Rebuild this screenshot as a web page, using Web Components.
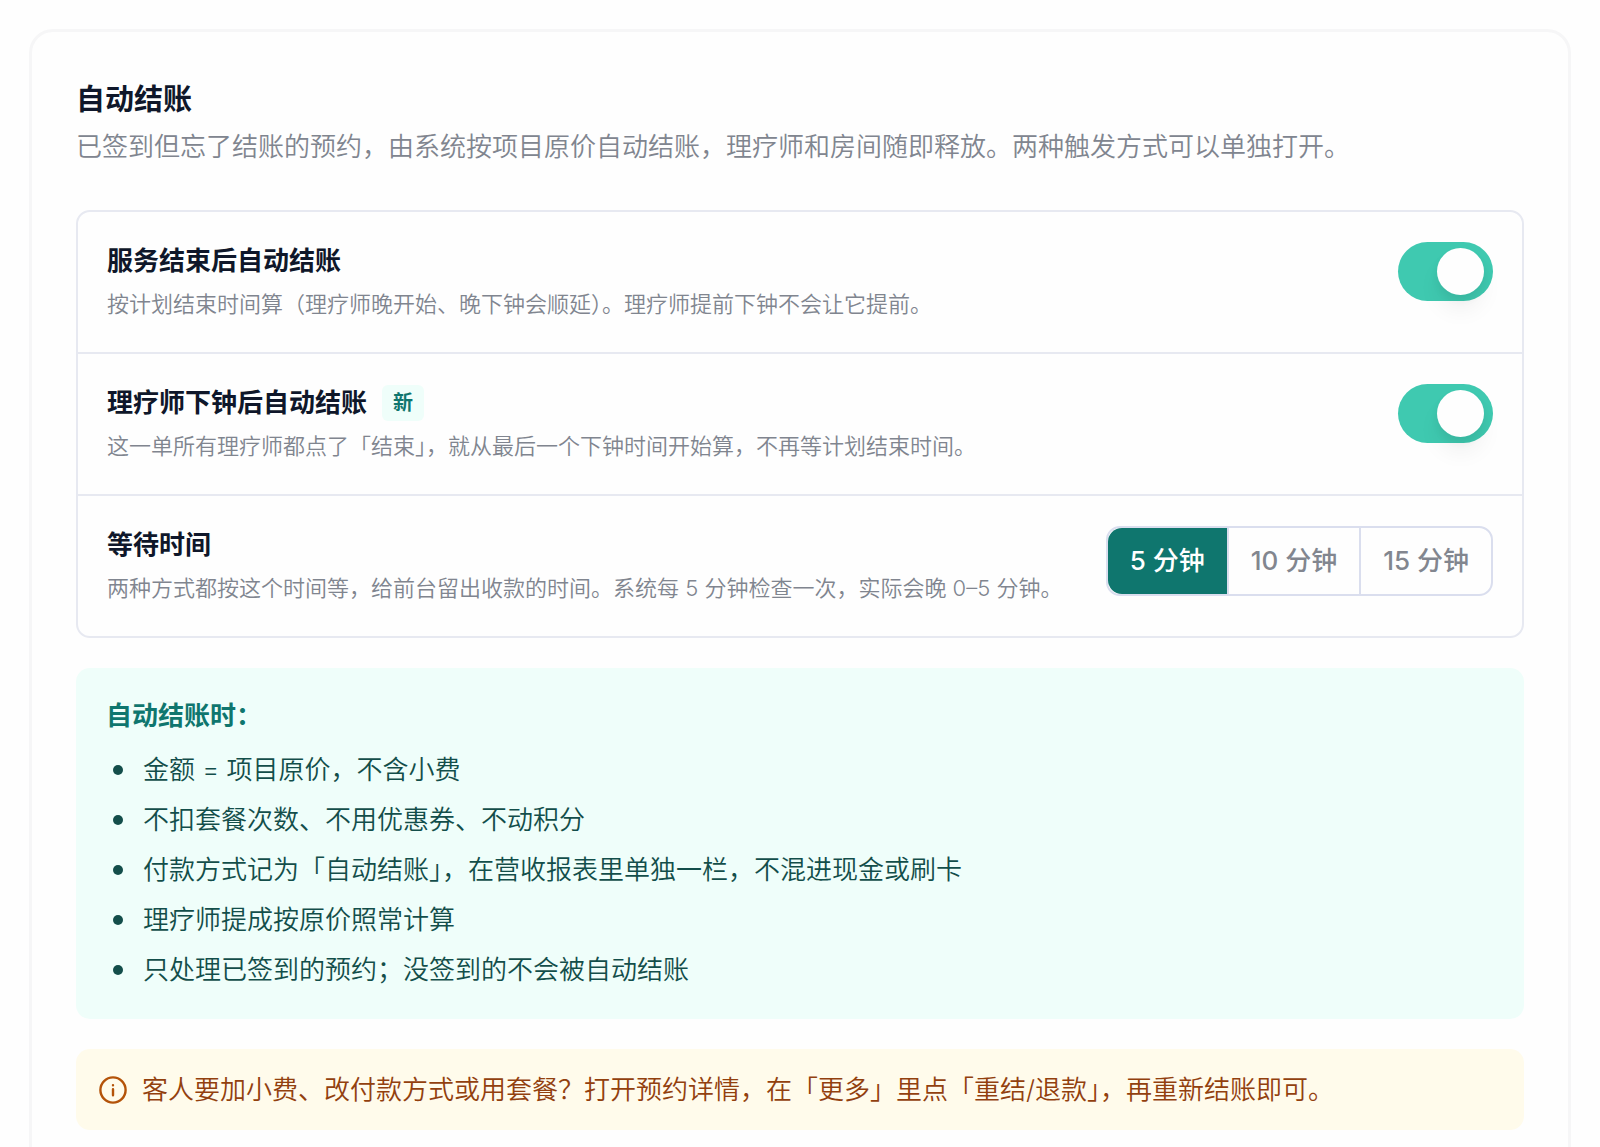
<!DOCTYPE html>
<html lang="zh-CN">
<head>
<meta charset="utf-8">
<meta name="viewport" content="width=device-width, initial-scale=1">
<title>自动结账</title>
<style>
  html { background: #fefefe; scrollbar-width: none; }
  body {
    margin: 0;
    padding: 29px;
    font: 350 26px/42px Inter, "Noto Sans CJK SC", sans-serif;
    color: #0f172a;
    --muted: #80858f;
    --line: #e7e9f1;
    --teal: #0f766e;
  }
</style>
</head>
<body>
<settings-card>
  <span slot="title">自动结账</span>
  <span slot="desc">已签到但忘了结账的预约，由系统按项目原价自动结账，理疗师和房间随即释放。两种触发方式可以单独打开。</span>
  <setting-list>
    <setting-row>
      <span slot="title">服务结束后自动结账</span>
      <span slot="desc">按计划结束时间算（理疗师晚开始、晚下钟会顺延）。理疗师提前下钟不会让它提前。</span>
      <toggle-switch slot="control" label="服务结束后自动结账"></toggle-switch>
    </setting-row>
    <setting-row>
      <span slot="title">理疗师下钟后自动结账</span>
      <new-badge slot="badge">新</new-badge>
      <span slot="desc">这一单所有理疗师都点了「结束」，就从最后一个下钟时间开始算，不再等计划结束时间。</span>
      <toggle-switch slot="control" label="理疗师下钟后自动结账"></toggle-switch>
    </setting-row>
    <setting-row>
      <span slot="title">等待时间</span>
      <span slot="desc">两种方式都按这个时间等，给前台留出收款的时间。系统每 5 分钟检查一次，实际会晚 0–5 分钟。</span>
      <wait-picker slot="control"></wait-picker>
    </setting-row>
  </setting-list>
  <rule-panel></rule-panel>
  <tip-banner>客人要加小费、改付款方式或用套餐？打开预约详情，在「更多」里点「重结/退款」，再重新结账即可。</tip-banner>
</settings-card>

<script>
const define = (name, html, setup) => {
  const template = document.createElement('template');
  template.innerHTML = html;
  customElements.define(name, class extends HTMLElement {
    constructor() {
      super();
      this.attachShadow({ mode: 'open' }).append(template.content.cloneNode(true));
    }
    connectedCallback() { if (setup) setup(this, this.shadowRoot); }
  });
};

define('settings-card', `
  <style>
    :host { display: block; border: 3px solid #f6f6f7; border-radius: 24px; padding: 46px 44px; background: #fefefe; }
    header { margin-bottom: 42px; }
    h2 { margin: 0 0 4px; font-size: 29px; line-height: 44px; font-weight: 600; }
    p { margin: 0; color: var(--muted); }
    .body { display: flex; flex-direction: column; gap: 30px; }
  </style>
  <header>
    <h2><slot name="title"></slot></h2>
    <p><slot name="desc"></slot></p>
  </header>
  <div class="body"><slot></slot></div>`);

define('setting-list', `
  <style>
    :host { display: block; border: 2px solid var(--line); border-radius: 14px; }
    ::slotted(:not(:first-child)) { border-top: 2px solid var(--line); }
  </style>
  <slot></slot>`);

define('setting-row', `
  <style>
    :host { display: flex; justify-content: space-between; align-items: flex-start; gap: 24px; padding: 30px 29px 29px; }
    .text { flex: 1; min-width: 0; }
    .head { display: flex; align-items: center; gap: 15px; height: 38px; }
    h3 { margin: 0; font-size: 26px; line-height: 38px; font-weight: 600; }
    p { margin: 5px 0 0; font-size: 22px; line-height: 38px; color: var(--muted); }
  </style>
  <div class="text">
    <div class="head"><h3><slot name="title"></slot></h3><slot name="badge"></slot></div>
    <p><slot name="desc"></slot></p>
  </div>
  <slot name="control"></slot>`);

define('new-badge', `
  <style>
    :host { display: block; padding: 0 11px; border-radius: 6px; background: #effefa; color: var(--teal);
            font-size: 20px; line-height: 36px; font-weight: 600; }
  </style>
  <slot></slot>`);

define('toggle-switch', `
  <style>
    :host { display: block; flex: none; }
    input { appearance: none; display: flex; align-items: center; box-sizing: border-box; width: 95px; height: 59px;
            margin: 0; padding: 0 9px; border-radius: 30px; background: #cbd5e1; cursor: pointer; }
    input:checked { background: #3fc9b0; justify-content: flex-end; }
    input::before { content: ""; width: 47px; height: 47px; border-radius: 50%; background: #fefefe;
            box-shadow: 0 16px 22px rgba(0, 0, 0, .05), 0 5px 9px rgba(0, 0, 0, .05); }
  </style>
  <input type="checkbox" role="switch" checked>`,
  (host, root) => root.querySelector('input').setAttribute('aria-label', host.getAttribute('label')));

define('wait-picker', `
  <style>
    :host { display: block; flex: none; }
    fieldset { display: flex; margin: 0; padding: 0; min-width: 0; border: 2px solid #dadeee; border-radius: 14px; overflow: hidden; }
    label { position: relative; padding: 0 22px; line-height: 66px; font-weight: 500; color: #82868f; cursor: pointer; }
    label + label { border-left: 2px solid #dadeee; }
    label:has(:checked) { background: var(--teal); color: #fff; }
    input { position: absolute; inset: 0; margin: 0; opacity: 0; }
  </style>
  <fieldset aria-label="等待时间">
    <label><input type="radio" name="wait" value="5" checked>5 分钟</label>
    <label><input type="radio" name="wait" value="10">10 分钟</label>
    <label><input type="radio" name="wait" value="15">15 分钟</label>
  </fieldset>`);

define('rule-panel', `
  <style>
    :host { display: block; padding: 30px 30px 28px; border-radius: 14px; background: #effefa; color: #134e4a; }
    h3 { margin: 0 0 15px; font-size: 26px; line-height: 36px; font-weight: 600; color: var(--teal); }
    ul { display: flex; flex-direction: column; gap: 8px; margin: 0; padding: 0 0 0 7px; list-style: none; }
    li { display: flex; align-items: center; gap: 20px; }
    li::before { content: ""; flex: none; width: 10px; height: 10px; border-radius: 50%; background: currentColor; }
  </style>
  <h3>自动结账时：</h3>
  <ul>
    <li>金额 = 项目原价，不含小费</li>
    <li>不扣套餐次数、不用优惠券、不动积分</li>
    <li>付款方式记为「自动结账」，在营收报表里单独一栏，不混进现金或刷卡</li>
    <li>理疗师提成按原价照常计算</li>
    <li>只处理已签到的预约；没签到的不会被自动结账</li>
  </ul>`);

define('tip-banner', `
  <style>
    :host { display: flex; align-items: center; gap: 15px; padding: 20px 23px 19px; border-radius: 14px; background: #fffbeb; color: #92400e; }
    svg { flex: none; width: 28px; height: 28px; fill: none; stroke: #b45309; stroke-width: 2.4; stroke-linecap: round; }
  </style>
  <svg viewBox="0 0 28 28" aria-hidden="true"><circle cx="14" cy="14" r="12.6"/><path d="M14 13.2v6M14 9.1v.1"/></svg>
  <span><slot></slot></span>`);
</script>
</body>
</html>
